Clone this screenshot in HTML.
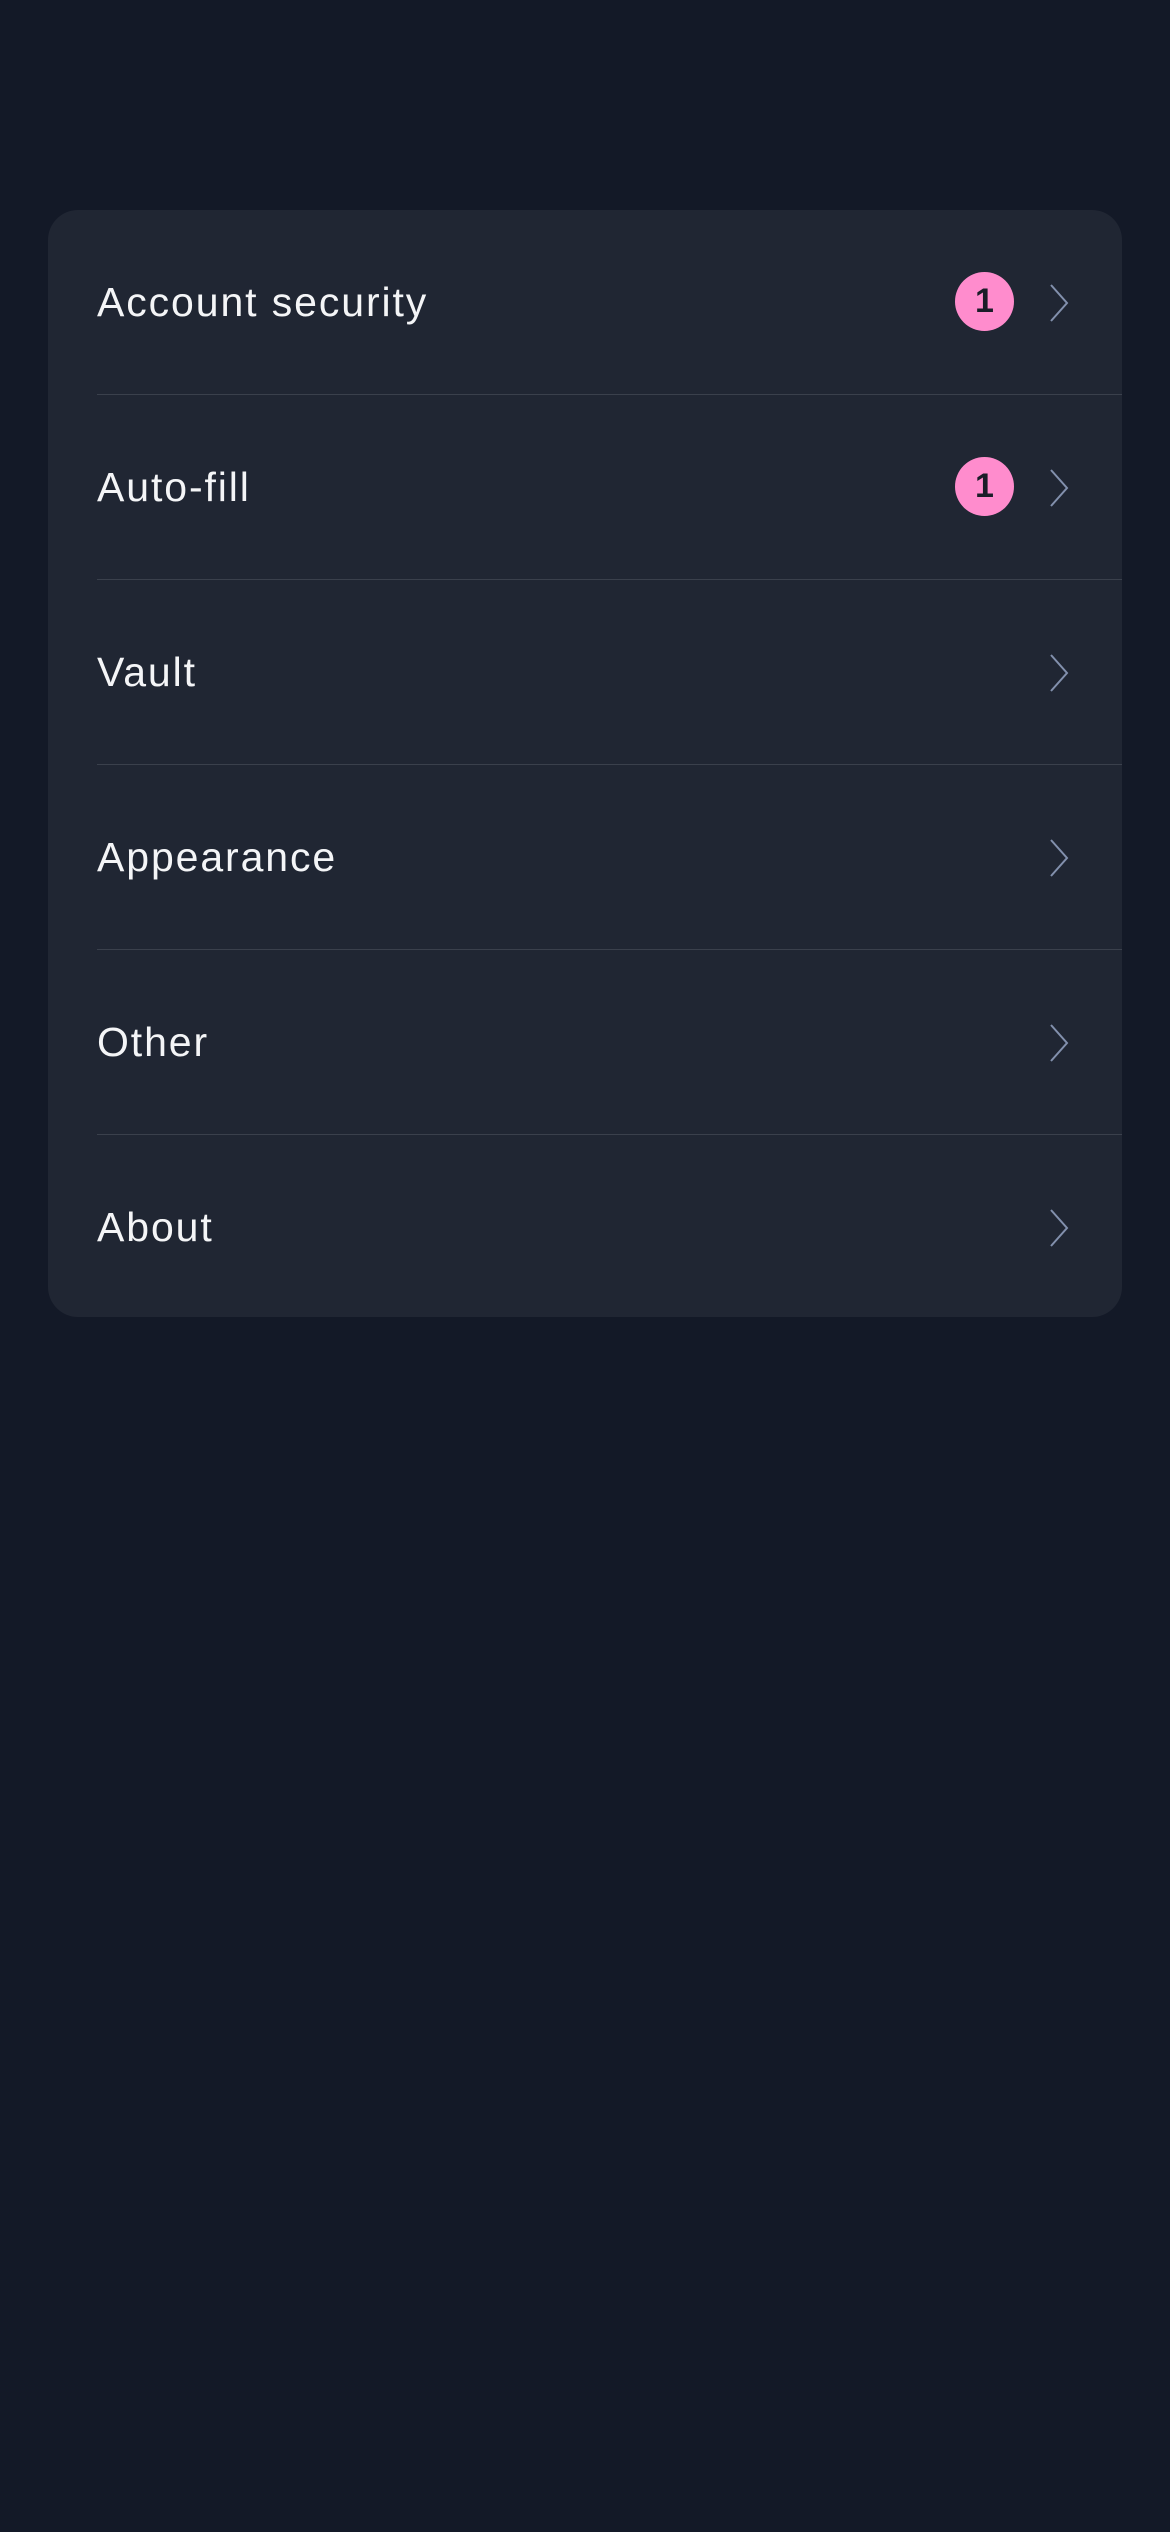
<!DOCTYPE html>
<html><head><meta charset="utf-8"><style>
html,body{margin:0;padding:0;}
body{width:1170px;height:2532px;background:#131927;font-family:"Liberation Sans",sans-serif;position:relative;overflow:hidden;}
.card{position:absolute;left:48px;top:210px;width:1074px;height:1107px;background:#202633;border-radius:30px;overflow:hidden;}
.row{position:relative;height:185px;}
.row:not(:last-child)::after{content:"";position:absolute;left:49px;right:0;bottom:0;height:1.5px;background:#3a404c;}
.label{position:absolute;left:49px;top:0;line-height:185px;font-size:41px;color:#f4f5f7;letter-spacing:1.9px;}
.badge{position:absolute;left:907px;top:62px;width:59px;height:59px;border-radius:50%;background:#ff8ccd;color:#1a1d28;font-weight:bold;font-size:34px;text-align:center;line-height:59px;}
.chev{position:absolute;left:1000px;top:73px;}
</style></head><body>
<div class="card">
<div class="row"><div class="label">Account security</div><div class="badge">1</div><svg class="chev" width="24" height="40" viewBox="0 0 24 40"><path d="M3 2 L19 20 L3 38" fill="none" stroke="#8290ad" stroke-width="2"/></svg></div>
<div class="row"><div class="label">Auto-fill</div><div class="badge">1</div><svg class="chev" width="24" height="40" viewBox="0 0 24 40"><path d="M3 2 L19 20 L3 38" fill="none" stroke="#8290ad" stroke-width="2"/></svg></div>
<div class="row"><div class="label">Vault</div><svg class="chev" width="24" height="40" viewBox="0 0 24 40"><path d="M3 2 L19 20 L3 38" fill="none" stroke="#8290ad" stroke-width="2"/></svg></div>
<div class="row"><div class="label">Appearance</div><svg class="chev" width="24" height="40" viewBox="0 0 24 40"><path d="M3 2 L19 20 L3 38" fill="none" stroke="#8290ad" stroke-width="2"/></svg></div>
<div class="row"><div class="label">Other</div><svg class="chev" width="24" height="40" viewBox="0 0 24 40"><path d="M3 2 L19 20 L3 38" fill="none" stroke="#8290ad" stroke-width="2"/></svg></div>
<div class="row"><div class="label">About</div><svg class="chev" width="24" height="40" viewBox="0 0 24 40"><path d="M3 2 L19 20 L3 38" fill="none" stroke="#8290ad" stroke-width="2"/></svg></div>
</div>
</body></html>
